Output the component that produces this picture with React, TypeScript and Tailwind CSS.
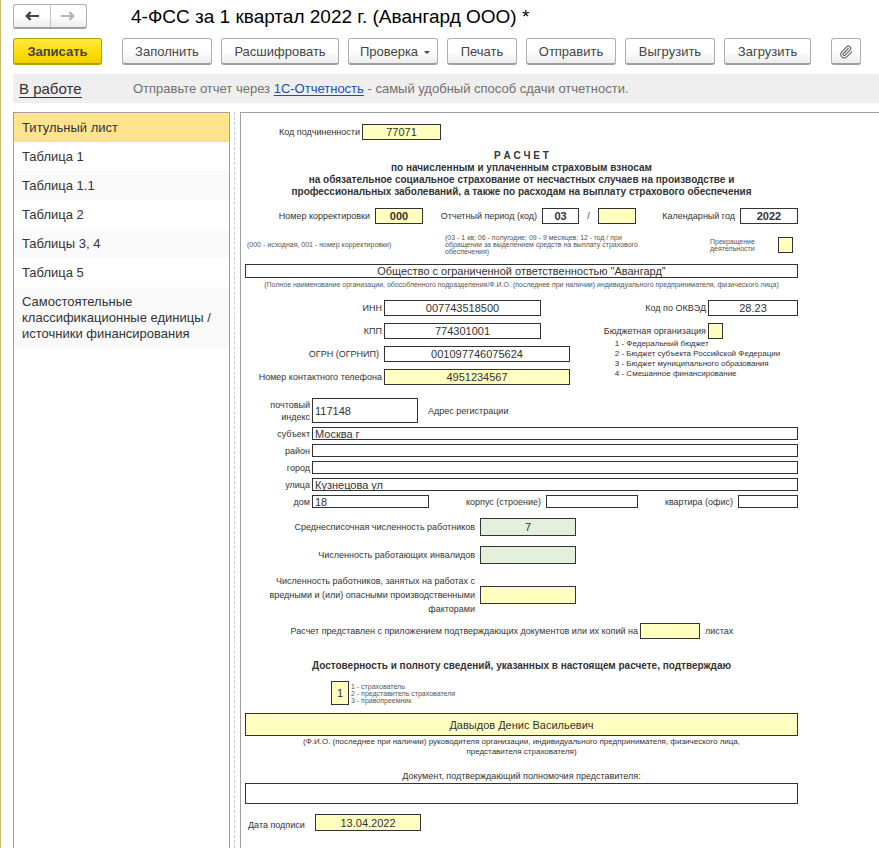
import React from "react";
import { Paperclip } from "lucide-react";

type FieldProps = {
  id: string;
  value?: string;
  className: string;
  label?: string;
};

function Field({ id, value = "", className, label }: FieldProps) {
  return (
    <input
      id={id}
      type="text"
      aria-label={label}
      defaultValue={value}
      className={`shrink-0 rounded-none border border-[#333] outline-none ${className}`}
    />
  );
}

const toolButton =
  "h-[27px] shrink-0 rounded-[3px] border border-[#b0b0b0] border-b-2 border-b-[#9f9f9f] bg-linear-to-b from-white from-50% to-[#ececec] pt-[2px] text-center text-[13px] leading-4 text-[#444]";

const addressField = "h-[13px] w-full bg-white px-[2px] text-[11px] leading-[11px]";

function ArrowIcon({ className }: { className: string }) {
  return (
    <svg viewBox="0 0 14 10" className={className} fill="none" stroke="currentColor" aria-hidden="true">
      <path d="M14 5H2" strokeWidth="2" />
      <path d="M5.6 1.2L1.8 5L5.6 8.8" strokeWidth="2.4" />
    </svg>
  );
}

const sections = [
  "Титульный лист",
  "Таблица 1",
  "Таблица 1.1",
  "Таблица 2",
  "Таблицы 3, 4",
  "Таблица 5",
  "Самостоятельные классификационные единицы / источники финансирования",
];

function Toolbar() {
  return (
    <div className="mt-[9px] flex pl-3">
      <button type="button" className="h-[27px] w-[89px] shrink-0 rounded-[3px] border border-[#b5a000] border-b-2 bg-linear-to-b from-[#ffe93b] via-[#ffdf00] to-[#efd000] pt-[2px] text-[13px] leading-4 font-bold text-[#444]">
        Записать
      </button>
      <div className="ml-5 flex gap-[9px]">
        <button type="button" className={`${toolButton} w-[90px]`}>Заполнить</button>
        <button type="button" className={`${toolButton} w-[118px]`}>Расшифровать</button>
        <button type="button" aria-haspopup="menu" className={`${toolButton} flex w-[90px] items-center justify-center gap-[6px] pl-1`}>
          Проверка
          <svg viewBox="0 0 6 3" className="h-[3px] w-[6px]" fill="currentColor" aria-hidden="true">
            <path d="M0 0H6L3 3Z" />
          </svg>
        </button>
        <button type="button" className={`${toolButton} w-[70px]`}>Печать</button>
        <button type="button" className={`${toolButton} w-[90px]`}>Отправить</button>
        <button type="button" className={`${toolButton} w-[90px]`}>Выгрузить</button>
        <button type="button" className={`${toolButton} w-[87px]`}>Загрузить</button>
      </div>
      <button type="button" aria-label="Присоединенные файлы" className={`${toolButton} ml-5 flex w-[30px] items-center justify-center`}>
        <Paperclip className="size-[14px] text-[#666]" strokeWidth={2} />
      </button>
    </div>
  );
}

function SectionList() {
  return (
    <nav className="w-[217px] shrink-0 border border-b-0 border-[#a0a0a0]">
      <ul>
        {sections.map((name, i) => (
          <li key={name} className={i === 0 ? "bg-[#ffe48f]" : i % 2 === 0 ? "bg-[#fafafa]" : "bg-white"}>
            <button type="button" className="block w-full px-2 pt-[7px] pb-[6px] text-left text-[13px] leading-4 text-[#333]">
              {name}
            </button>
          </li>
        ))}
      </ul>
    </nav>
  );
}

function Sheet() {
  return (
    <form className="w-[553px] pt-[11px] text-[9px] leading-3 text-[#333]">
      <div className="flex items-center gap-[2px]">
        <label htmlFor="code" className="w-[115px] text-right whitespace-nowrap">Код подчиненности</label>
        <Field id="code" value="77071" className="h-4 w-[79px] bg-[#ffffbf] text-center text-[11px]" />
      </div>

      <h2 className="mt-[10px] text-center text-[10px] leading-3 font-bold whitespace-nowrap">
        Р А С Ч Е Т<br />
        по начисленным и уплаченным страховым взносам<br />
        на обязательное социальное страхование от несчастных случаев на производстве и<br />
        профессиональных заболеваний, а также по расходам на выплату страхового обеспечения
      </h2>

      <div className="mt-[10px] flex items-center whitespace-nowrap">
        <label htmlFor="corr" className="w-[125px] text-right">Номер корректировки</label>
        <Field id="corr" value="000" className="ml-[5px] h-4 w-12 bg-[#ffffbf] text-center text-[11px] font-bold" />
        <label htmlFor="period" className="w-[114px] text-right">Отчетный период (код)</label>
        <Field id="period" value="03" className="ml-[5px] h-4 w-[37px] bg-white text-center text-[11px] font-bold" />
        <span className="w-[19px] text-center">/</span>
        <Field id="period2" label="Код выделения средств" className="h-4 w-[38px] bg-[#ffffbf] text-center text-[11px]" />
        <label htmlFor="year" className="ml-auto">Календарный год</label>
        <Field id="year" value="2022" className="ml-[5px] h-4 w-[58px] bg-white text-center text-[11px] font-bold" />
      </div>

      <div className="mt-[10px] flex items-center pl-[2px] text-[7px] leading-[7px] whitespace-nowrap text-[#555]">
        <p className="w-[198px]">(000 - исходная, 001 - номер корректировки)</p>
        <p>
          (03 - 1 кв; 06 - полугодие; 09 - 9 месяцев; 12 - год / при<br />
          обращении за выделением средств на выплату страхового<br />
          обеспечения)
        </p>
        <label htmlFor="stop" className="ml-auto w-[68px]">
          Прекращение<br />деятельности
        </label>
        <Field id="stop" className="mr-[5px] h-4 w-[15px] bg-[#ffffbf]" />
      </div>

      <Field id="org" label="Полное наименование организации" value={'Общество с ограниченной ответственностью "Авангард"'} className="mt-[9px] block h-[14px] w-full bg-white text-center text-[11px]" />
      <p className="mt-[2px] text-center text-[7px] leading-[10px] whitespace-nowrap text-[#555]">
        (Полное наименование организации, обособленного подразделения/Ф.И.О. (последнее при наличии) индивидуального предпринимателя, физического лица)
      </p>

      <div className="mt-[10px] flex justify-between">
        <div className="grid grid-cols-[137px_auto] items-center justify-items-start gap-x-[2px] gap-y-[7px] text-[9px] whitespace-nowrap">
          <label htmlFor="inn" className="justify-self-end">ИНН</label>
          <Field id="inn" value="007743518500" className="h-4 w-[157px] bg-white text-center text-[11px]" />
          <label htmlFor="kpp" className="justify-self-end">КПП</label>
          <Field id="kpp" value="774301001" className="h-4 w-[157px] bg-white text-center text-[11px]" />
          <label htmlFor="ogrn" className="justify-self-end pr-[3px]">ОГРН (ОГРНИП)</label>
          <Field id="ogrn" value="001097746075624" className="h-4 w-[186px] bg-white text-center text-[11px]" />
          <label htmlFor="phone" className="justify-self-end">Номер контактного телефона</label>
          <Field id="phone" value="4951234567" className="h-4 w-[186px] bg-[#ffffbf] text-center text-[11px]" />
        </div>
        <div>
          <div className="grid grid-cols-[1fr_90px] items-center justify-items-start gap-x-[2px] gap-y-[7px] whitespace-nowrap">
            <label htmlFor="okved" className="justify-self-end">Код по ОКВЭД</label>
            <Field id="okved" value="28.23" className="h-4 w-[90px] bg-white text-center text-[11px]" />
            <label htmlFor="budget" className="justify-self-end">Бюджетная организация</label>
            <Field id="budget" className="h-4 w-[15px] bg-[#ffffbf]" />
          </div>
          <ul className="pl-[11px] text-[8px] leading-[10px] whitespace-nowrap">
            <li>1 - Федеральный бюджет</li>
            <li>2 - Бюджет субъекта Российской Федерации</li>
            <li>3 - Бюджет муниципального образования</li>
            <li>4 - Смешанное финансирование</li>
          </ul>
        </div>
      </div>

      <fieldset className="mt-[13px] grid grid-cols-[65px_1fr] items-center gap-x-[2px] gap-y-1 whitespace-nowrap">
        <label htmlFor="zip" className="text-right">почтовый<br />индекс</label>
        <div className="flex items-center">
          <Field id="zip" value="117148" className="h-[25px] w-[106px] bg-white px-[2px] text-[11px]" />
          <span className="ml-[10px]">Адрес регистрации</span>
        </div>
        <label htmlFor="region" className="text-right">субъект</label>
        <Field id="region" value="Москва г" className={addressField} />
        <label htmlFor="district" className="text-right">район</label>
        <Field id="district" className={addressField} />
        <label htmlFor="city" className="text-right">город</label>
        <Field id="city" className={addressField} />
        <label htmlFor="street" className="text-right">улица</label>
        <Field id="street" value="Кузнецова ул" className={addressField} />
        <label htmlFor="house" className="text-right">дом</label>
        <div className="flex items-center">
          <Field id="house" value="18" className="h-[13px] w-[117px] bg-white px-[2px] text-[11px] leading-[11px]" />
          <label htmlFor="block" className="w-[112px] text-right">корпус (строение)</label>
          <Field id="block" className="ml-[5px] h-[13px] w-[92px] bg-white" />
          <label htmlFor="flat" className="ml-auto">квартира (офис)</label>
          <Field id="flat" className="ml-[5px] h-[13px] w-[60px] bg-white" />
        </div>
      </fieldset>

      <div className="mt-[10px] grid grid-cols-[230px_96px] items-center gap-x-[5px] gap-y-[10px] text-right leading-[14px] whitespace-nowrap">
        <label htmlFor="staff">Среднесписочная численность работников</label>
        <Field id="staff" value="7" className="h-[18px] w-full bg-[#e5f0dc] text-center text-[11px]" />
        <label htmlFor="disabled">Численность работающих инвалидов</label>
        <Field id="disabled" className="h-[18px] w-full bg-[#e5f0dc] text-center text-[11px]" />
        <label htmlFor="hazard">
          Численность работников, занятых на работах с<br />
          вредными и (или) опасными производственными<br />
          факторами
        </label>
        <Field id="hazard" className="h-[18px] w-full bg-[#ffffbf] text-center text-[11px]" />
      </div>

      <div className="mt-[7px] flex items-center whitespace-nowrap">
        <label htmlFor="pages" className="w-[393px] text-right">Расчет представлен с приложением подтверждающих документов или их копий на</label>
        <Field id="pages" className="ml-[2px] h-4 w-[60px] bg-[#ffffbf] text-center text-[11px]" />
        <span className="ml-[5px]">листах</span>
      </div>

      <h3 className="mt-[21px] text-center text-[10px] leading-3 font-bold whitespace-nowrap">
        Достоверность и полноту сведений, указанных в настоящем расчете, подтверждаю
      </h3>

      <div className="mt-[9px] flex items-center gap-[2px] pl-[86px]">
        <Field id="signer" label="Кто подтверждает" value="1" className="h-6 w-[18px] bg-[#ffffbf] text-center text-[11px]" />
        <ul className="text-[7px] leading-[7px] text-[#555]">
          <li>1 - страхователь</li>
          <li>2 - представитель страхователя</li>
          <li>3 - правопреемник</li>
        </ul>
      </div>

      <Field id="head" label="Ф.И.О. руководителя" value="Давыдов Денис Васильевич" className="mt-2 block h-[23px] w-full bg-[#ffffbf] text-center text-[11px]" />
      <p className="mt-px text-center text-[8px] leading-[10px] whitespace-nowrap">
        (Ф.И.О. (последнее при наличии) руководителя организации, индивидуального предпринимателя, физического лица,<br />
        представителя страхователя)
      </p>

      <label htmlFor="doc" className="mt-[13px] block text-center">Документ, подтверждающий полномочия представителя:</label>
      <Field id="doc" className="mt-px block h-[21px] w-full bg-white text-center text-[11px]" />

      <div className="mt-[10px] flex items-end gap-2 pl-[3px]">
        <label htmlFor="date" className="w-[59px] whitespace-nowrap">Дата подписи</label>
        <Field id="date" value="13.04.2022" className="h-[17px] w-[106px] bg-[#ffffbf] text-center text-[11px]" />
      </div>
    </form>
  );
}

export default function App() {
  return (
    <div className="flex min-h-screen flex-col overflow-hidden border-l border-[#cdb96c] bg-white pt-1 font-['Liberation_Sans',Arial,sans-serif]">
      <header className="flex items-center pl-3">
        <div className="flex h-[25px] w-[74px] rounded-[3px] border border-[#b0b0b0] border-b-2 border-b-[#9f9f9f] bg-linear-to-b from-white from-50% to-[#ececec]">
          <button type="button" aria-label="Назад" className="flex flex-1 items-center justify-center border-r border-[#c4c4c4] text-[#444]">
            <ArrowIcon className="h-[10px] w-[14px]" />
          </button>
          <button type="button" aria-label="Вперед" className="flex flex-1 items-center justify-center text-[#b5b5b5]">
            <ArrowIcon className="h-[10px] w-[14px] rotate-180" />
          </button>
        </div>
        <h1 className="ml-11 text-[19px] leading-6 whitespace-nowrap text-black">4-ФСС за 1 квартал 2022 г. (Авангард ООО) *</h1>
      </header>

      <Toolbar />

      <div className="mt-[9px] ml-3 flex h-[29px] items-center bg-[#efefef] pl-[6px] whitespace-nowrap">
        <a href="#status" className="w-[114px] text-[15px] leading-5 text-[#333]">
          <span className="border-b border-[#333]">В работе</span>
        </a>
        <p className="text-[13px] leading-4 text-[#707070]">
          Отправьте отчет через <a href="#report" className="text-[#1a4fb0] underline underline-offset-2">1С-Отчетность</a> - самый удобный способ сдачи отчетности.
        </p>
      </div>

      <div className="mt-[9px] flex flex-1 pl-3">
        <SectionList />
        <div className="mx-1 w-px shrink-0 border-l border-dashed border-[#ccc]" />
        <main className="ml-px min-w-0 flex-1 border-t border-l border-[#a0a0a0] pl-1">
          <Sheet />
        </main>
      </div>
    </div>
  );
}
